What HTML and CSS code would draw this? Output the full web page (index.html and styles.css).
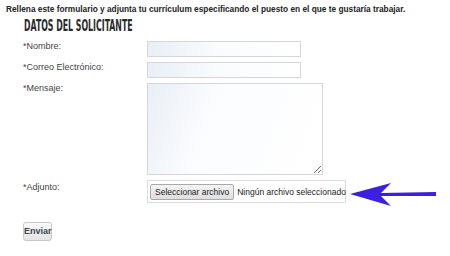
FILE: index.html
```html
<!DOCTYPE html>
<html lang="es">
<head>
  <meta charset="UTF-8" />
  <title>Trabaja con nosotros</title>
  <link rel="stylesheet" href="styles.css">
</head>
<body>
  <p class="intro">Rellena este formulario y adjunta tu currículum especificando el puesto en el que te gustaría trabajar.</p>
  <h2 class="section-title"><span>Datos del solicitante</span></h2>

  <form class="form">
    <label class="label" for="nombre">*Nombre:</label>
    <input class="field" type="text" id="nombre" />

    <label class="label" for="correo">*Correo Electrónico:</label>
    <input class="field" type="email" id="correo" />

    <label class="label" for="mensaje">*Mensaje:</label>
    <textarea class="field area" id="mensaje"></textarea>

    <label class="label label-file">*Adjunto:</label>
    <div class="file-row">
      <div class="file-box">
        <span class="file-btn">Seleccionar archivo</span>
        <span class="file-name">Ningún archivo seleccionado</span>
      </div>
      <svg class="arrow" width="90" height="24" viewBox="0 0 90 24">
        <path d="M0 11 L41 0 L31 10 L86 9 L86 13 L31 13 L41 23 Z" fill="#3d1fe0" />
      </svg>
    </div>

    <div class="actions">
      <button type="submit" class="send">Enviar</button>
    </div>
  </form>
</body>
</html>
```

FILE: styles.css
```css
body {
  margin: 0;
  font-family: 'Liberation Sans', Arial, sans-serif;
  background: #fff;
  color: #222;
}
.intro {
  margin: 0;
  padding: 4px 0 0 6px;
  font-size: 8.3px;
  font-weight: bold;
  color: #222;
  white-space: nowrap;
}
.section-title {
  margin: 5px 0 0 24px;
  height: 14px;
  line-height: 14px;
  font-family: 'Liberation Sans Narrow', 'DejaVu Sans Condensed', sans-serif;
  font-size: 15px;
  font-weight: bold;
  text-transform: uppercase;
  color: #2a2a2a;
}
.section-title span {
  display: inline-block;
  transform: scaleX(0.58);
  transform-origin: left center;
  white-space: nowrap;
}
.form {
  display: grid;
  grid-template-columns: 124px auto;
  row-gap: 5px;
  padding: 8px 0 0 23px;
  justify-items: start;
}
.label {
  font-size: 9px;
  color: #444;
  padding-top: 0;
}
.field {
  box-sizing: border-box;
  width: 154px;
  height: 16px;
  margin: 0;
  padding: 1px 3px;
  border: 1px solid #d6d6d6;
  background: linear-gradient(to right, #e9eff6, #f9fbfd 45%, #fff);
  font-size: 9px;
}
.area {
  width: 176px;
  height: 92px;
  resize: both;
  background: linear-gradient(110deg, #e9eff6, #fbfcfe 35%, #fff);
}
.label-file {
  padding-top: 2px;
}
.file-row {
  display: flex;
  align-items: flex-start;
  height: 23px;
}
.file-box {
  box-sizing: border-box;
  width: 199px;
  height: 23px;
  border: 1px solid #dcdcdc;
  display: flex;
  align-items: center;
  padding-left: 2px;
  font-size: 8.5px;
  color: #222;
  white-space: nowrap;
}
.file-btn {
  display: inline-block;
  padding: 2px 4px;
  border: 1px solid #a9a9a9;
  border-radius: 2px;
  background: linear-gradient(#f4f4f4, #dedede);
  color: #222;
}
.file-name {
  margin-left: 3px;
}
.arrow {
  flex: none;
  margin: 3px 0 0 4px;
}
.actions {
  grid-column: 1 / 2;
  margin-top: 12px;
}
.send {
  box-sizing: border-box;
  width: 29px;
  height: 19px;
  padding: 0;
  border: 1px solid #c9c9c9;
  border-radius: 3px;
  background: linear-gradient(#fafafa, #e3e3e3);
  font-family: 'Liberation Sans', Arial, sans-serif;
  font-size: 9px;
  font-weight: bold;
  color: #3a4450;
}
```
